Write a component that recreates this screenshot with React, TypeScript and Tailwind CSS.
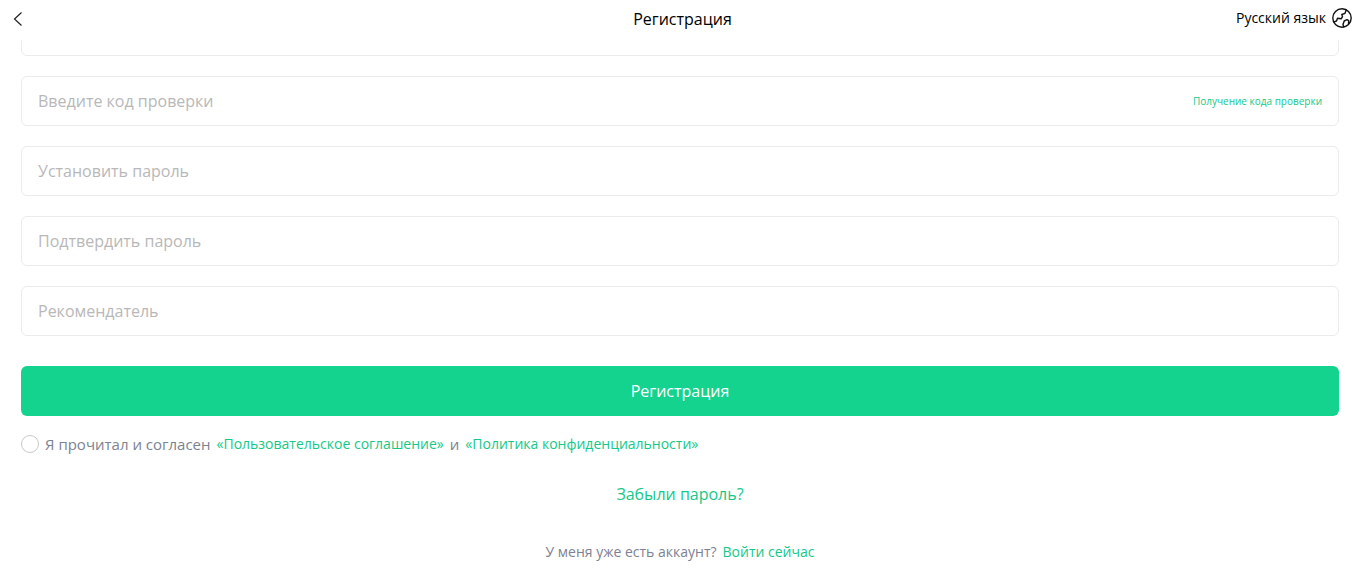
import { useState } from 'react';

const fields = [
  { id: 'account', label: 'Номер телефона', placeholder: '', type: 'text' },
  { id: 'code', label: 'Код проверки', placeholder: 'Введите код проверки', type: 'text' },
  { id: 'password', label: 'Пароль', placeholder: 'Установить пароль', type: 'password' },
  { id: 'confirm', label: 'Повтор пароля', placeholder: 'Подтвердить пароль', type: 'password' },
  { id: 'referrer', label: 'Рекомендатель', placeholder: 'Рекомендатель', type: 'text' },
];

function BackIcon() {
  return (
    <svg viewBox="0 0 10 16" className="w-[10px] h-4" fill="none" stroke="#222222" strokeWidth="1.2">
      <path d="M8.5 1.5 1.5 8l7 6.5" />
    </svg>
  );
}

function GlobeIcon() {
  return (
    <svg
      viewBox="0 0 20 20"
      className="w-5 h-5"
      fill="none"
      stroke="#111111"
      strokeWidth="1.4"
      strokeLinecap="round"
      strokeLinejoin="round"
    >
      <circle cx="10" cy="10" r="9.2" />
      <path d="M1.8 13.8 4.5 13 5.5 10.2 9.3 10.7 10.500 8.600 9.800 6.500 13 5.300 14.200 2" />
      <path d="M11.800 19 11 16.500 12.200 13 15 11.700 16.700 12.700 16.500 15.500" />
    </svg>
  );
}

export default function App() {
  const [agreed, setAgreed] = useState(false);

  return (
    <div className="min-h-screen bg-white font-['Open_Sans','Noto_Sans',sans-serif] text-black">
      <header className="fixed inset-x-0 top-0 z-10 grid h-10 grid-cols-[1fr_auto_1fr] items-center bg-white pb-0.5 pl-[13px] pr-[9px]">
        <button type="button" aria-label="Назад" className="justify-self-start">
          <BackIcon />
        </button>
        <h1 className="text-center text-base">Регистрация</h1>
        <button type="button" className="flex items-center gap-1.5 justify-self-end pb-0.5 text-sm">
          Русский язык
          <GlobeIcon />
        </button>
      </header>

      <main className="pt-1.5 pl-[21px] pr-[22px]">
        <form onSubmit={(e) => e.preventDefault()}>
          <div className="flex flex-col gap-5">
            {fields.map((field) => (
              <div key={field.id} className="flex h-[50px] items-center rounded-md border border-[#ebebeb] px-4">
                <input
                  id={field.id}
                  type={field.type}
                  aria-label={field.label}
                  placeholder={field.placeholder}
                  className="min-w-0 flex-1 bg-transparent text-base outline-none placeholder:text-[#b8b8b8]"
                />
                {field.id === 'code' && (
                  <button type="button" className="text-[10px] text-[#14c987]">
                    Получение кода проверки
                  </button>
                )}
              </div>
            ))}
          </div>

          <button type="submit" className="mt-[30px] h-[50px] w-full rounded-md bg-[#13d38f] text-base text-white">
            Регистрация
          </button>

          <div className="mt-4 flex items-center gap-1.5 text-[15px] leading-6 text-[#7d8292]">
            <input
              id="agree"
              type="checkbox"
              checked={agreed}
              onChange={(e) => setAgreed(e.target.checked)}
              className="h-[18px] w-[18px] appearance-none rounded-full border border-[#c8c9cc] checked:bg-[#13d38f]"
            />
            <p className="flex flex-wrap items-center gap-x-1.5">
              <label htmlFor="agree">Я прочитал и согласен</label>
              <a href="#agreement" className="text-sm text-[#14c987]">«Пользовательское соглашение»</a>
              <span>и</span>
              <a href="#privacy" className="text-sm text-[#14c987]">«Политика конфиденциальности»</a>
            </p>
          </div>
        </form>

        <div className="mt-[26px] text-center">
          <a href="#forgot" className="text-base text-[#14c987]">Забыли пароль?</a>
        </div>

        <p className="mt-[34px] flex justify-center gap-1.5 text-sm leading-6 text-[#7d8292]">
          У меня уже есть аккаунт?
          <a href="#login" className="text-[#14c987]">Войти сейчас</a>
        </p>
      </main>
    </div>
  );
}
